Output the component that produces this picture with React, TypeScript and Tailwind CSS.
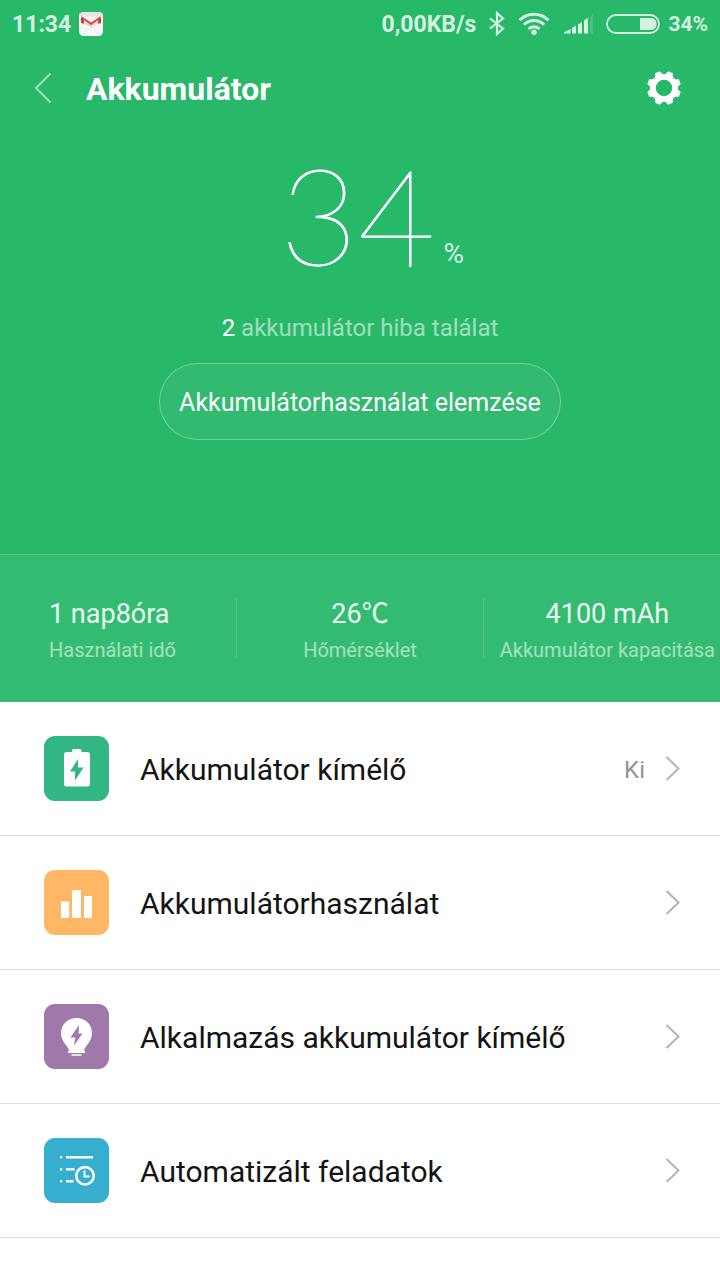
import type { ReactNode } from "react";

function GmailIcon() {
  return (
    <svg width="24" height="24" viewBox="0 0 24 24" aria-hidden="true">
      <rect width="24" height="24" rx="4.5" fill="#f6f6f6" />
      <path d="M4.5 0h15A4.5 4.5 0 0 1 24 4.5H0A4.5 4.5 0 0 1 4.500 0Z" fill="#e6e6e6" />
      <path d="M4 22 12 15l8 7" fill="none" stroke="#dcdcdc" strokeWidth=".8" strokeDasharray="1.2 1" />
      <path d="M4 11 12 15.500l8-4.500V8.500L12 13.500 4 8.500Z" fill="#dcdcdc" />
      <path d="M2 6c0-1.200 1-1.500 2-.8l8 5.300 8-5.300c1-.7 2-.4 2 .8v4.500l-2.600 1.300V8L12 13.300 4.600 8v3.800L2 10.500Z" fill="#e2473d" />
      <path d="M19.400 8 22 6.500v4l-2.600 1.300ZM4.600 8 2 6.500v4l2.600 1.300Z" fill="#c2352c" />
    </svg>
  );
}

function BluetoothIcon() {
  return (
    <svg width="18" height="26" viewBox="0 0 18 26" fill="none" stroke="currentColor" strokeWidth="2.200" aria-hidden="true">
      <path d="M2 7.500 15 17.500 9 23V2l6 5.500L2 17.500" />
    </svg>
  );
}

function WifiIcon() {
  return (
    <svg width="32" height="24" viewBox="0 0 32 24" fill="none" stroke="currentColor" strokeWidth="3" aria-hidden="true">
      <path d="M1.500 8.200a20.500 20.500 0 0 1 29 0" />
      <path d="M6 12.700a14.200 14.200 0 0 1 20 0" />
      <path d="M10.500 17a7.800 7.800 0 0 1 11 0" />
      <circle cx="16" cy="20.300" r="2.700" fill="currentColor" stroke="none" />
    </svg>
  );
}

function SignalIcon() {
  return (
    <svg width="30" height="22" viewBox="0 0 30 22" fill="currentColor" aria-hidden="true">
      <path d="M0 20.500v-1L6.500 16v4.500ZM8 20.500V15l4-2.500v8ZM14 20.500v-9L18 9v11.500ZM20 20.500v-13l4-3v16Z" />
      <path d="m26 3.500 3-2.500v19.500h-3Z" opacity=".2" />
    </svg>
  );
}

function BatteryIcon() {
  return (
    <svg width="54" height="20" viewBox="0 0 54 20" aria-hidden="true">
      <rect x="1" y="1" width="52" height="18" rx="9" fill="none" stroke="currentColor" strokeWidth="1.800" />
      <path d="M34 4h11c3.500 0 5.500 2.500 5.500 6s-2 6-5.500 6H34Z" fill="currentColor" />
    </svg>
  );
}

function GearIcon() {
  const teeth = [22.5, 67.5, 112.5, 157.5, 202.5, 247.5, 292.5, 337.5];
  return (
    <svg width="34" height="34" viewBox="-16.5 -16.5 33 33" aria-hidden="true">
      <circle r="10.800" fill="none" stroke="white" strokeWidth="5.600" />
      {teeth.map((angle) => (
        <path
          key={angle}
          d="M-4.400-11.500-2.900-15.500Q-2.700-16.500-2-16.500H2Q2.700-16.500 2.900-15.500L4.400-11.500Z"
          fill="white"
          transform={`rotate(${angle})`}
        />
      ))}
    </svg>
  );
}

function Chevron() {
  return (
    <svg className="shrink-0" width="15" height="26" viewBox="0 0 15 26" fill="none" stroke="#b4b4b4" strokeWidth="2" aria-hidden="true">
      <path d="m1.500 1 12 11.500L1.500 24" />
    </svg>
  );
}

function SaverIcon() {
  return (
    <svg width="65" height="65" viewBox="0 0 65 65" aria-hidden="true">
      <rect width="65" height="65" rx="11" fill="#32b684" />
      <path d="M28 14.500q0-1.500 1.500-1.500h6.500q1.500 0 1.500 1.500V16h6q2.500 0 2.500 2.500v29.500q0 2.500-2.500 2.500h-21q-2.500 0-2.500-2.500V18.500q0-2.500 2.500-2.500H28Z" fill="#fff" />
      <path d="M34 23 26 35.500h5L31 44.500 39.500 31.500H34Z" fill="#32b684" />
    </svg>
  );
}

function UsageIcon() {
  return (
    <svg width="65" height="65" viewBox="0 0 65 65" aria-hidden="true">
      <rect width="65" height="65" rx="11" fill="#ffb765" />
      <g fill="#fff">
        <rect x="17" y="31.500" width="8.200" height="16.500" rx="1" />
        <rect x="28" y="20" width="9" height="28" rx="1" />
        <rect x="40" y="26" width="8" height="22" rx="1" />
      </g>
    </svg>
  );
}

function BulbIcon() {
  return (
    <svg width="65" height="65" viewBox="0 0 65 65" aria-hidden="true">
      <rect width="65" height="65" rx="11" fill="#9f79aa" />
      <path d="M32.500 14C23.500 14 17 20.700 17 29c0 5 2 8 4.500 11.500C23.500 43 25 45 25 47h-1v2h17v-2h-1c0-2 1.500-4 3.500-6.500C46 37 48 34 48 29c0-8.300-6.500-15-15.500-15Z" fill="#fff" />
      <path d="M27.500 50h10v2h-10Z" fill="#e9dfeb" />
      <path d="M35 21 26.500 33.500h4.800L30 41.500 38.500 29.500H34.500Z" fill="#9f79aa" />
    </svg>
  );
}

function TasksIcon() {
  return (
    <svg width="65" height="65" viewBox="0 0 65 65" aria-hidden="true">
      <rect width="65" height="65" rx="11" fill="#35aed0" />
      <g fill="none" stroke="#fff" strokeWidth="2.600">
        <path d="M16 19.300h2.200M22 19.300h27M16 31.300h2.200M22 31.300h8.500M16 43.300h2.200M22 43.300h7.500" />
        <circle cx="41" cy="37.800" r="8.700" />
        <path d="M40.500 32.500v6h5" strokeWidth="2" />
      </g>
    </svg>
  );
}

function Stat({ value, label, className }: { value: string; label: string; className: string }) {
  return (
    <div className={`flex h-[60px] flex-col whitespace-nowrap ${className}`}>
      <dd className="order-1 text-[27px] leading-8 text-white/90">{value}</dd>
      <dt className="order-2 pt-1 text-[20px] leading-8 text-white/55">{label}</dt>
    </div>
  );
}

function Row({ icon, label, value }: { icon: ReactNode; label: string; value?: string }) {
  return (
    <li className="border-b border-[#e0e0e0]">
      <a href="#" className="flex h-[133px] items-center pr-10 pl-11">
        {icon}
        <span className="ml-[31px] grow pt-0.5 text-[30px] leading-9 text-[#141414]">{label}</span>
        {value && <span className="mr-5 pt-0.5 text-[24px] leading-8 text-[#949494]">{value}</span>}
        <Chevron />
      </a>
    </li>
  );
}

export default function App() {
  return (
    <div className="min-h-screen bg-white font-['Roboto','Noto_Sans_CJK_SC',sans-serif]">
      <div className="bg-[#28b869] text-white">
        <div className="flex h-12 items-center justify-between px-3 text-[23px] font-bold text-[#d4f1e1]">
          <div className="flex items-center gap-2">
            <span className="pt-0.5">11:34</span>
            <GmailIcon />
          </div>
          <div className="flex items-center gap-3">
            <span className="pt-0.5">0,00KB/s</span>
            <BluetoothIcon />
            <WifiIcon />
            <div className="flex items-center gap-3 pl-0.5">
              <SignalIcon />
              <BatteryIcon />
            </div>
            <span className="-ml-1 pt-0.5 text-[21px]">34%</span>
          </div>
        </div>

        <header className="flex h-20 items-center pr-[39px] pl-[34px]">
          <button type="button" aria-label="Vissza">
            <svg width="18" height="32" viewBox="0 0 18 32" fill="none" stroke="#a2dfbe" strokeWidth="2" aria-hidden="true">
              <path d="M16.500 1.500 2 16l14.500 14.500" />
            </svg>
          </button>
          <h1 className="ml-[34px] grow pt-0.5 text-[32px] leading-10 font-bold">Akkumulátor</h1>
          <button type="button" aria-label="Beállítások">
            <GearIcon />
          </button>
        </header>

        <section className="flex flex-col items-center pb-[114px]">
          <p className="flex items-end gap-2 pt-3 pl-6">
            <span className="font-['Lato',sans-serif] text-[134px] leading-[150px] font-thin [-webkit-text-stroke:1px_white]">34</span>
            <span className="pb-5 text-[28px] leading-8 text-white/80">%</span>
          </p>
          <p className="mt-[22px] text-[24px] leading-8 text-white/55">
            <span className="text-white">2</span> akkumulátor hiba találat
          </p>
          <button
            type="button"
            className="mt-[19px] h-[77px] rounded-full border border-white/30 bg-white/5 px-[19px] pt-0.5 text-[25px]"
          >
            Akkumulátorhasználat elemzése
          </button>
        </section>

        <dl className="grid grid-cols-[236px_1fr_236px] border-t border-white/15 bg-white/5 pt-[43px] pb-[44px]">
          <Stat value="1 nap8óra" label="Használati idő" className="items-start pl-[49px]" />
          <Stat value="26℃" label="Hőmérséklet" className="items-center border-x border-white/15" />
          <div className="flex justify-end pr-[5px]">
            <Stat value="4100 mAh" label="Akkumulátor kapacitása" className="items-center" />
          </div>
        </dl>
      </div>

      <ul>
        <Row icon={<SaverIcon />} label="Akkumulátor kímélő" value="Ki" />
        <Row icon={<UsageIcon />} label="Akkumulátorhasználat" />
        <Row icon={<BulbIcon />} label="Alkalmazás akkumulátor kímélő" />
        <Row icon={<TasksIcon />} label="Automatizált feladatok" />
      </ul>
    </div>
  );
}
